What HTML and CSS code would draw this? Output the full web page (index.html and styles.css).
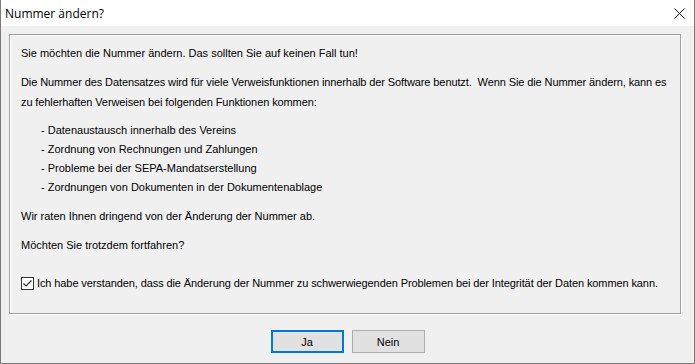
FILE: index.html
```html
<!DOCTYPE html>
<html lang="de">
<head>
<meta charset="utf-8">
<title>Nummer ändern?</title>
<link rel="stylesheet" href="styles.css">
</head>
<body>
<div class="window">
  <div class="titlebar">
    <span class="title">Nummer ändern?</span>
    <svg class="close" width="11" height="11" viewBox="0 0 11 11"><path d="M0.5 0.5 L10.5 10.5 M10.5 0.5 L0.5 10.5" stroke="#111" stroke-width="1" fill="none"/></svg>
  </div>
  <div class="body">
    <div class="panel">
      <p class="p1">Sie möchten die Nummer ändern. Das sollten Sie auf keinen Fall tun!</p>
      <p class="p2 tight">Die Nummer des Datensatzes wird für viele Verweisfunktionen innerhalb der Software benutzt.&nbsp; Wenn Sie die Nummer ändern, kann es<br>zu fehlerhaften Verweisen bei folgenden Funktionen kommen:</p>
      <ul class="list">
        <li>- Datenaustausch innerhalb des Vereins</li>
        <li>- Zordnung von Rechnungen und Zahlungen</li>
        <li>- Probleme bei der SEPA-Mandatserstellung</li>
        <li>- Zordnungen von Dokumenten in der Dokumentenablage</li>
      </ul>
      <p class="p3">Wir raten Ihnen dringend von der Änderung der Nummer ab.</p>
      <p class="p4">Möchten Sie trotzdem fortfahren?</p>
      <label class="check">
        <span class="box"><svg width="11" height="11" viewBox="0 0 11 11"><path d="M1.5 5.5 L4 8 L9.5 2.5" stroke="#333" stroke-width="1.2" fill="none"/></svg></span>
        <span class="tight">Ich habe verstanden, dass die Änderung der Nummer zu schwerwiegenden Problemen bei der Integrität der Daten kommen kann.</span>
      </label>
    </div>
    <div class="buttons">
      <button class="btn default">Ja</button>
      <button class="btn">Nein</button>
    </div>
  </div>
</div>
</body>
</html>
```
FILE: styles.css
```css
* { box-sizing: border-box; }
html, body { margin: 0; padding: 0; }
body {
  width: 695px;
  height: 364px;
  overflow: hidden;
  font-family: "Liberation Sans", Arial, sans-serif;
  font-size: 11px;
  color: #000;
}
.window {
  width: 695px;
  height: 364px;
  border: 1px solid #7a7a7a;
  border-top: none;
  display: flex;
  flex-direction: column;
  background: #f0f0f0;
}
.titlebar {
  height: 26px;
  background: #fff;
  display: flex;
  align-items: center;
  justify-content: space-between;
  padding: 0 9px 0 4px;
}
.title {
  font-family: "Open Sans", "Liberation Sans", sans-serif;
  font-size: 12px;
  padding-top: 1px;
}
.close { display: block; }
.body {
  flex: 1;
  padding: 8px 13px 0 8px;
  display: flex;
  flex-direction: column;
}
.panel {
  height: 280px;
  border: 1px solid #a0a0a0;
  box-shadow: 1px 1px 0 #fff, inset 1px 1px 0 #fff;
  padding: 9px 11px 0 11px;
  white-space: nowrap;
}
.tight { letter-spacing: -0.1px; }
p { margin: 0; line-height: 19px; }
.p1 { margin-bottom: 9px; }
.p2 { line-height: 20px; margin-bottom: 9px; }
.list { list-style: none; margin: 0 0 10px 0; padding: 0 0 0 20px; }
.list li { line-height: 19px; }
.p3 { margin-bottom: 10px; }
.p4 { margin-bottom: 19px; }
.check {
  display: flex;
  align-items: center;
  gap: 3px;
  line-height: 19px;
}
.box {
  width: 13px;
  height: 13px;
  border: 1px solid #333;
  background: #fff;
  display: flex;
  align-items: center;
  justify-content: center;
}
.box svg { display: block; }
.buttons {
  display: flex;
  justify-content: center;
  gap: 8px;
  margin-top: 16px;
  padding-left: 5px;
}
.btn {
  width: 73px;
  height: 23px;
  font-family: "Liberation Sans", Arial, sans-serif;
  font-size: 11px;
  color: #000;
  background: #e1e1e1;
  border: 1px solid #adadad;
  padding: 0;
}
.btn.default {
  border: 2px solid #0078d7;
}
```
